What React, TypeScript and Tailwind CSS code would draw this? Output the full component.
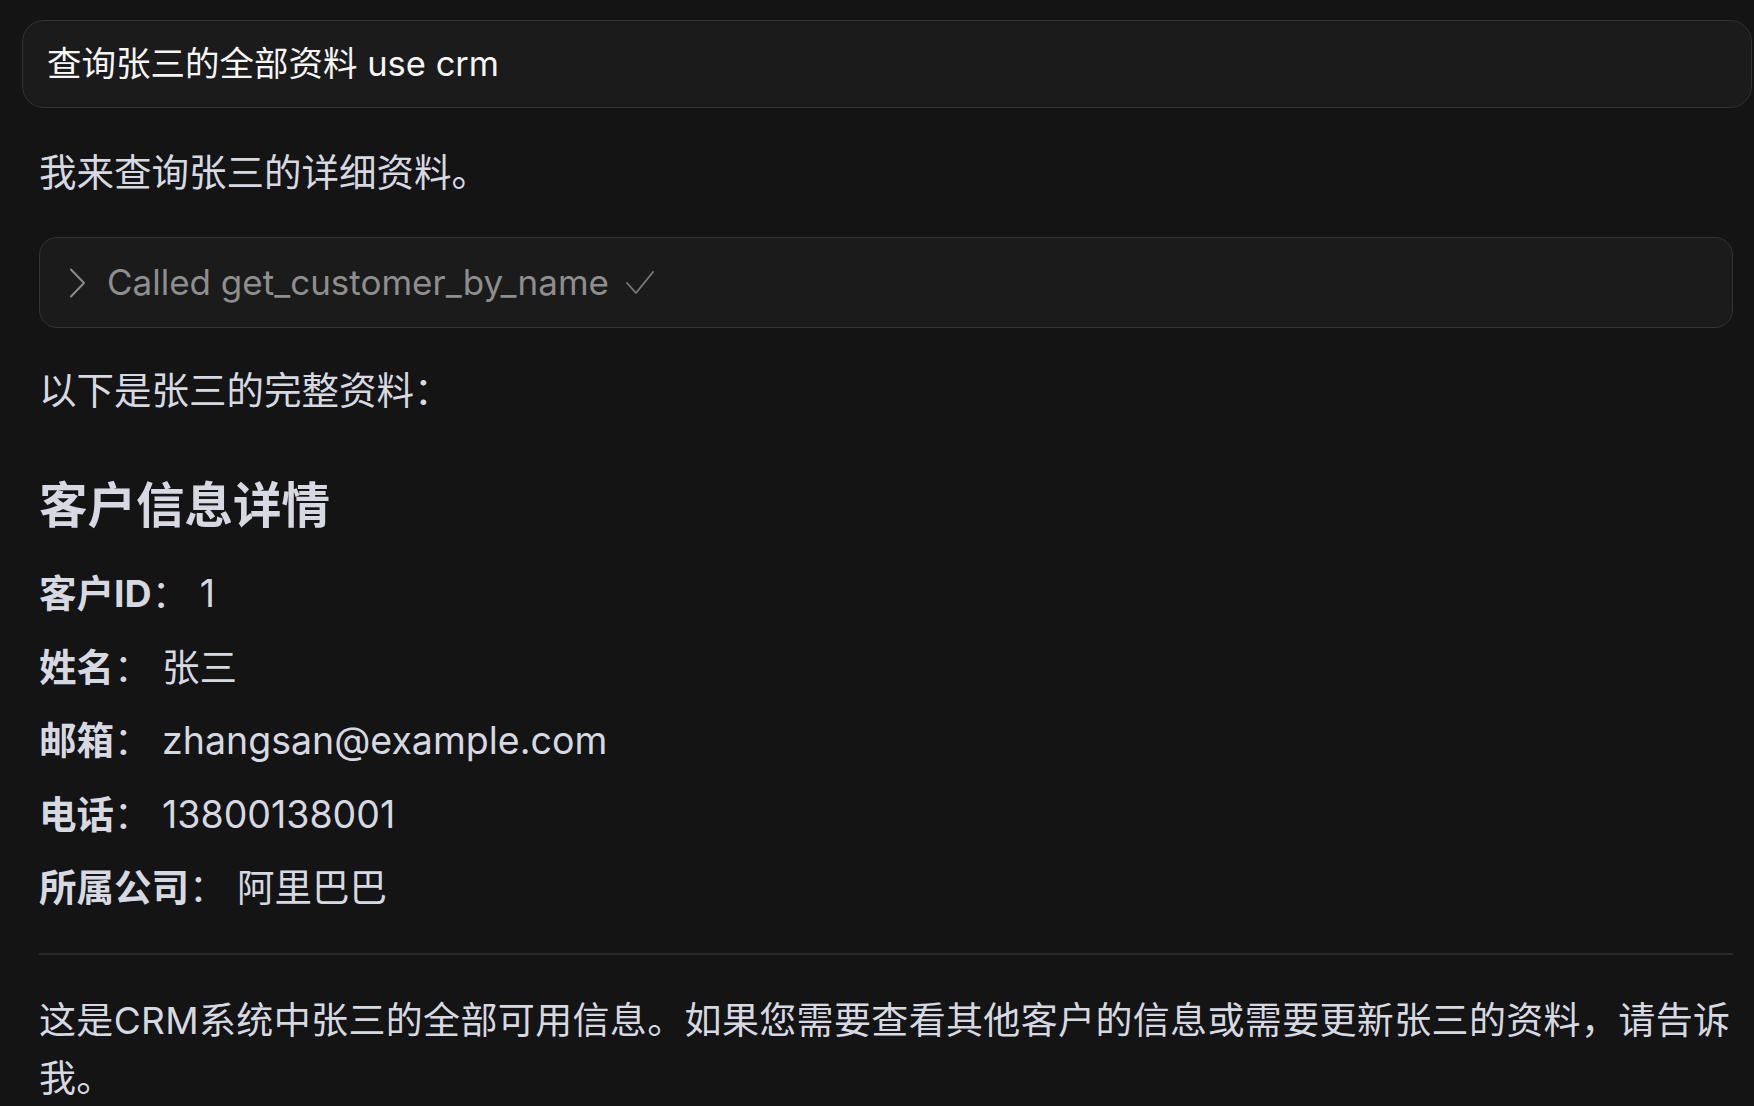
import React from "react";

const FONT = { fontFamily: "Inter, 'Noto Sans CJK SC', 'Noto Sans', sans-serif" };

function Row({ label, value }: { label: string; value: string }) {
  return (
    <p className="text-[37.5px] leading-[58px] text-[#d6d9e1]">
      <span className="font-bold">{label}</span>
      <span>： {value}</span>
    </p>
  );
}

export default function App() {
  return (
    <div style={FONT} className="min-h-screen w-full bg-[#141414] pl-[22px] pr-[2px] pt-[20px] pb-[10px]">
      <div className="flex h-[88px] items-center rounded-[22px] border border-[#333333] bg-[#1b1b1b] px-[24px]">
        <span className="text-[34.5px] text-[#f5f5f5]">查询张三的全部资料 use crm</span>
      </div>

      <div className="pl-[17px] pr-[19px]">
        <p className="mt-[36px] text-[37.5px] leading-[58px] text-[#d6d9e1]">我来查询张三的详细资料。</p>

        <div className="mt-[35px] flex h-[91px] items-center rounded-[18px] border border-[#333333] bg-[#1b1b1b] pl-[29px]">
          <svg width="17" height="30" viewBox="0 0 17 30" fill="none" className="shrink-0">
            <polyline points="2,1.5 15,15 2,28.5" stroke="#8a8a8a" strokeWidth="2" strokeLinecap="round" strokeLinejoin="round" />
          </svg>
          <span className="ml-[21px] text-[35px] text-[#8e8e8e]">Called get_customer_by_name</span>
          <svg width="28" height="24" viewBox="0 0 28 24" fill="none" className="ml-[17px] shrink-0">
            <polyline points="1,12 10,22 27,1" stroke="#7a7a7a" strokeWidth="1.8" strokeLinecap="round" strokeLinejoin="round" />
          </svg>
        </div>

        <p className="mt-[34px] text-[37.5px] leading-[58px] text-[#d6d9e1]">以下是张三的完整资料：</p>

        <h2 className="mt-[54px] text-[48.5px] font-bold leading-[64px] text-[#d6d9e1]">客户信息详情</h2>

        <div className="mt-[27px] flex flex-col gap-[15.5px]">
          <Row label="客户ID" value="1" />
          <Row label="姓名" value="张三" />
          <Row label="邮箱" value="zhangsan@example.com" />
          <Row label="电话" value="13800138001" />
          <Row label="所属公司" value="阿里巴巴" />
        </div>

        <div className="mt-[36px] h-[2px] w-full bg-[#2a2a2a]" />

        <p className="mt-[37px] text-[37px] leading-[58px] tracking-[0.35px] text-[#d6d9e1]">
          这是CRM系统中张三的全部可用信息。如果您需要查看其他客户的信息或需要更新张三的资料，请告诉我。
        </p>
      </div>
    </div>
  );
}
